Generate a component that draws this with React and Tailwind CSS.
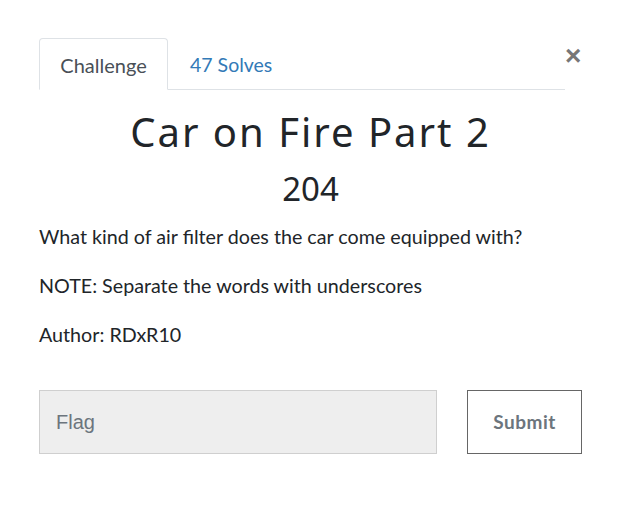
import React from "react";

const App = () => {
  return (
    <div className="w-[621px] h-[512px] bg-white relative" style={{ fontFamily: "Lato, 'Noto Sans', sans-serif" }}>
      <button className="absolute left-[565px] top-[42px] text-[28px] leading-none font-bold text-[#777]" style={{ fontFamily: "'Liberation Sans', Arial, sans-serif" }}>
        ×
      </button>
      <div className="pt-[38px] pl-[39px] pr-[39px]">
        <div className="flex w-[526px] border-b border-[#dee2e6] h-[52px]">
          <div className="w-[129px] h-[52px] -mb-px pt-[2px] border border-[#dee2e6] border-b-white rounded-t bg-white flex items-center justify-center text-[20px] text-[#495057]">
            Challenge
          </div>
          <div className="px-[22px] pt-[2px] flex items-center text-[19.5px] text-[#337ab7]">47 Solves</div>
        </div>
        <h1 className="mt-[18px] text-center text-[40px] leading-[48px] text-[#212529] tracking-[2px]" style={{ fontFamily: "'Noto Sans', Lato, sans-serif", fontWeight: 400 }}>
          Car on Fire Part 2
        </h1>
        <div className="mt-[13px] text-center text-[33px] leading-[40px] text-[#212529]" style={{ fontFamily: "'Noto Sans', Lato, sans-serif" }}>
          204
        </div>
        <div className="mt-[14px] text-[19.7px] leading-[28px] text-[#212529]">
          <p className="mb-[21px]">What kind of air filter does the car come equipped with?</p>
          <p className="mb-[21px]">NOTE: Separate the words with underscores</p>
          <p>Author: RDxR10</p>
        </div>
        <div className="mt-[41px] flex">
          <input
            placeholder="Flag"
            className="w-[398px] h-[64px] bg-[#eeeeee] border border-[#cfcfcf] px-[16px] text-[20px] placeholder-[#6c757d] outline-none"
            style={{ fontFamily: "'Liberation Sans', Arial, sans-serif" }}
          />
          <button className="ml-[30px] w-[115px] h-[64px] border border-[#666] bg-white text-[19px] font-bold text-[#6c757d] tracking-[0.5px]">
            Submit
          </button>
        </div>
      </div>
    </div>
  );
};

export default App;
